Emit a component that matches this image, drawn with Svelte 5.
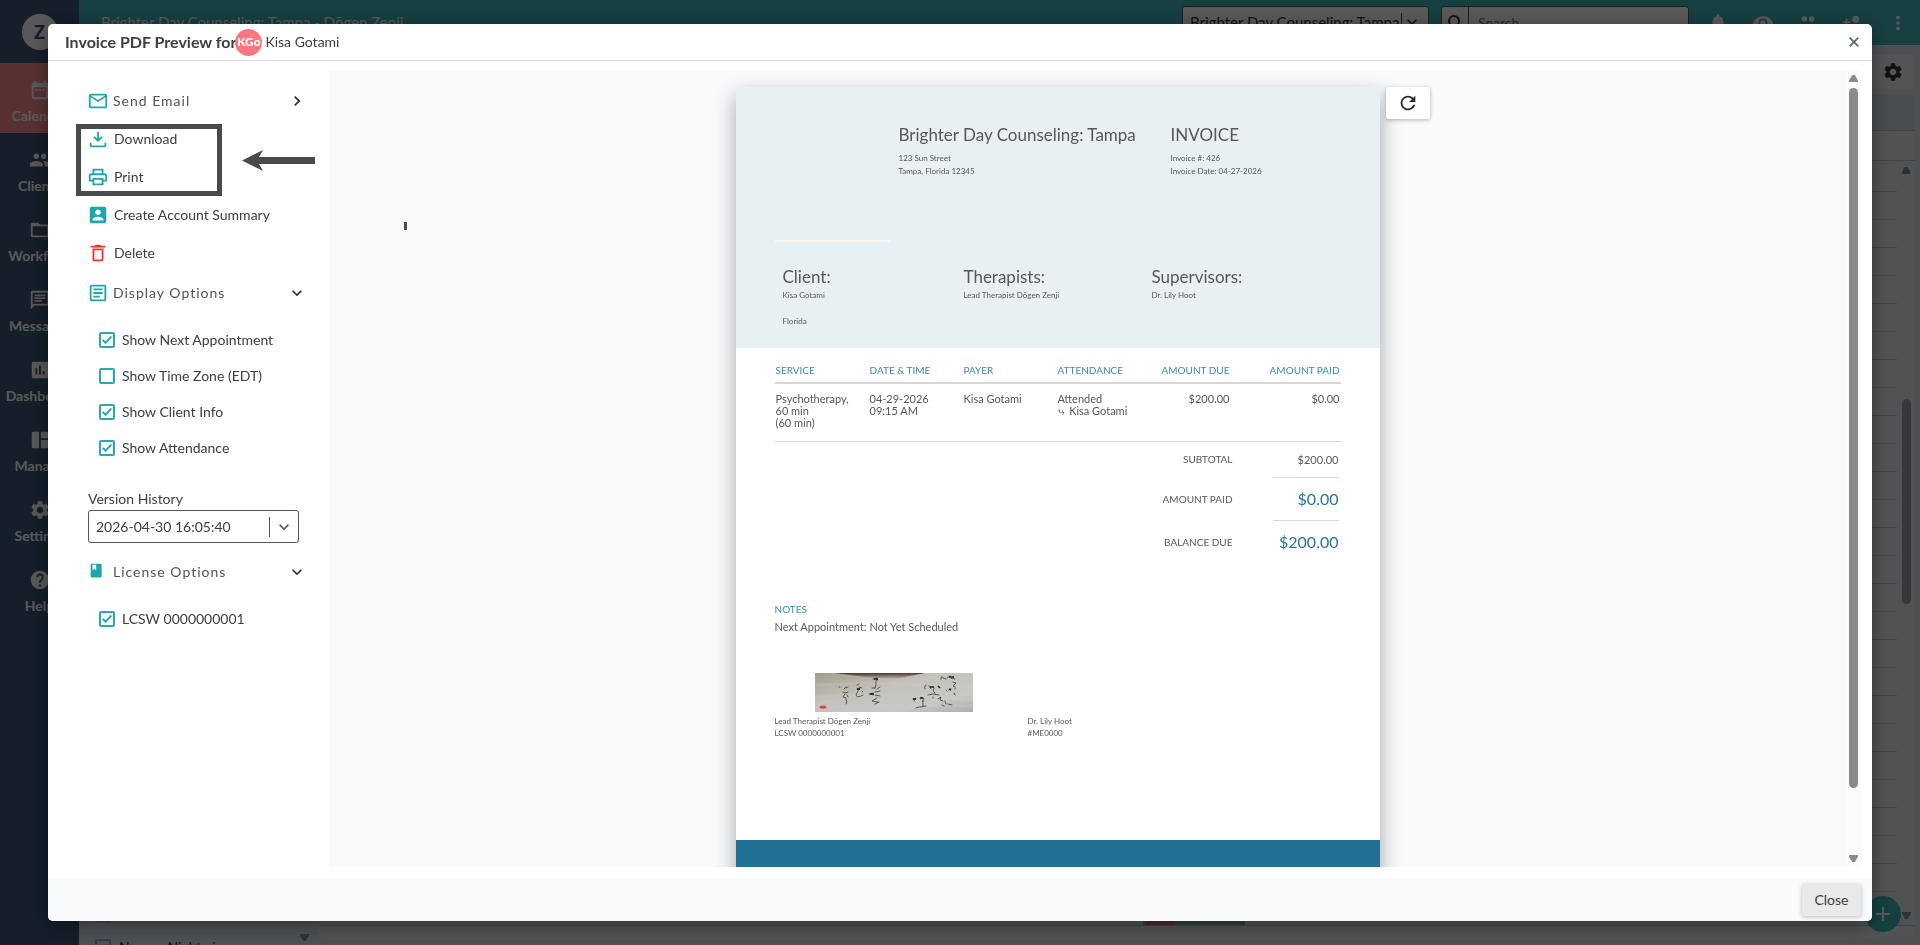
<script>
  const icons = {
    calendar: 'M19 4h-1V2h-2v2H8V2H6v2H5c-1.1 0-2 .9-2 2v14c0 1.1.9 2 2 2h14c1.1 0 2-.9 2-2V6c0-1.1-.9-2-2-2zm0 16H5V9h14v11zM7 11h2v2H7zm4 0h2v2h-2zm4 0h2v2h-2z',
    people: 'M16 11c1.66 0 2.99-1.34 2.99-3S17.66 5 16 5c-1.66 0-3 1.34-3 3s1.34 3 3 3zm-8 0c1.66 0 2.99-1.34 2.99-3S9.66 5 8 5C6.34 5 5 6.34 5 8s1.34 3 3 3zm0 2c-2.33 0-7 1.17-7 3.5V19h14v-2.5c0-2.33-4.67-3.5-7-3.5zm8 0c-.29 0-.62.02-.97.05 1.16.84 1.97 1.97 1.97 3.45V19h6v-2.5c0-2.33-4.67-3.5-7-3.5z',
    folder: 'M20 6h-8l-2-2H4c-1.1 0-2 .9-2 2v12c0 1.1.9 2 2 2h16c1.1 0 2-.9 2-2V8c0-1.1-.9-2-2-2zm0 12H4V8h16v10z',
    chat: 'M4 4h16v12H5.17L4 17.17V4m0-2c-1.1 0-2 .9-2 2v18l4-4h14c1.1 0 2-.9 2-2V4c0-1.1-.9-2-2-2H4zm2 10h8v2H6v-2zm0-3h12v2H6V9zm0-3h12v2H6V6z',
    chart: 'M19 3H5c-1.1 0-2 .9-2 2v14c0 1.1.9 2 2 2h14c1.1 0 2-.9 2-2V5c0-1.1-.9-2-2-2zM9 17H7v-7h2v7zm4 0h-2V7h2v10zm4 0h-2v-4h2v4z',
    grid: 'M11 21H5c-1.1 0-2-.9-2-2V5c0-1.1.9-2 2-2h6v18zm2 0h6c1.1 0 2-.9 2-2v-7h-8v9zm8-11V5c0-1.1-.9-2-2-2h-6v7h8z',
    settings: 'M19.14 12.94c.04-.3.06-.61.06-.94 0-.32-.02-.64-.07-.94l2.03-1.58c.18-.14.23-.41.12-.61l-1.92-3.32c-.12-.22-.37-.29-.59-.22l-2.39.96c-.5-.38-1.03-.7-1.62-.94l-.36-2.54c-.04-.24-.24-.41-.48-.41h-3.84c-.24 0-.43.17-.47.41l-.36 2.54c-.59.24-1.13.57-1.62.94l-2.39-.96c-.22-.08-.47 0-.59.22L2.74 8.87c-.12.21-.08.47.12.61l2.03 1.58c-.05.3-.09.63-.09.94s.02.64.07.94l-2.03 1.58c-.18.14-.23.41-.12.61l1.92 3.32c.12.22.37.29.59.22l2.39-.96c.5.38 1.03.7 1.62.94l.36 2.54c.05.24.24.41.48.41h3.84c.24 0 .44-.17.47-.41l.36-2.54c.59-.24 1.13-.56 1.62-.94l2.39.96c.22.08.47 0 .59-.22l1.92-3.32c.12-.22.07-.47-.12-.61l-2.01-1.58zM12 15.6c-1.98 0-3.6-1.62-3.6-3.6s1.62-3.6 3.6-3.6 3.6 1.62 3.6 3.6-1.62 3.6-3.6 3.6z',
    help: 'M12 2C6.48 2 2 6.48 2 12s4.48 10 10 10 10-4.48 10-10S17.52 2 12 2zm1 17h-2v-2h2v2zm2.07-7.75l-.9.92C13.45 12.9 13 13.5 13 15h-2v-.5c0-1.1.45-2.1 1.17-2.83l1.24-1.26c.37-.36.59-.86.59-1.41 0-1.1-.9-2-2-2s-2 .9-2 2H8c0-2.21 1.79-4 4-4s4 1.79 4 4c0 .88-.36 1.68-.93 2.25z',
    mail: 'M22 6c0-1.1-.9-2-2-2H4c-1.1 0-2 .9-2 2v12c0 1.1.9 2 2 2h16c1.1 0 2-.9 2-2V6zm-2 0l-8 5-8-5h16zm0 12H4V8l8 5 8-5v10z',
    download: 'M11 4h2v7.5l2.6-2.6L17 10.3l-5 5-5-5 1.4-1.4 2.6 2.6V4zM3 16h2v3h14v-3h2v3c0 1.1-.9 2-2 2H5c-1.1 0-2-.9-2-2v-3z',
    print: 'M19 8h-1V3H6v5H5c-1.66 0-3 1.34-3 3v6h4v4h12v-4h4v-6c0-1.66-1.34-3-3-3zM8 5h8v3H8V5zm8 12v2H8v-4h8v2zm2-2v-2H6v2H4v-4c0-.55.45-1 1-1h14c.55 0 1 .45 1 1v4h-2z',
    account: 'M3 5v14c0 1.1.89 2 2 2h14c1.1 0 2-.9 2-2V5c0-1.1-.9-2-2-2H5c-1.11 0-2 .9-2 2zm12 4c0 1.66-1.34 3-3 3s-3-1.34-3-3 1.34-3 3-3 3 1.34 3 3zm-9 8c0-2 4-3.1 6-3.1s6 1.1 6 3.1v1H6v-1z',
    trash: 'M6 19c0 1.1.9 2 2 2h8c1.1 0 2-.9 2-2V7H6v12zM8 9h8v10H8V9zm7.5-5l-1-1h-5l-1 1H4v2h16V4z',
    article: 'M19 5v14H5V5h14m0-2H5c-1.1 0-2 .9-2 2v14c0 1.1.9 2 2 2h14c1.1 0 2-.9 2-2V5c0-1.1-.9-2-2-2zM14 17H7v-2h7v2zm3-4H7v-2h10v2zm0-4H7V7h10v2z',
    book: 'M4 4.500C4 3.500 4.500 3 5.500 3h9c1 0 1.500.5 1.500 1.500v12c0 1-.5 1.500-1.500 1.500h-9c-1 0-1.500-.5-1.500-1.500v-12zM6 4v6l2-1.500 2 1.500V4z',
    refresh: 'M17.65 6.35C16.2 4.9 14.21 4 12 4c-4.42 0-7.99 3.58-7.99 8s3.57 8 7.99 8c3.73 0 6.84-2.55 7.73-6h-2.08c-.82 2.33-3.04 4-5.65 4-3.31 0-6-2.69-6-6s2.69-6 6-6c1.66 0 3.14.69 4.22 1.78L13 11h7V4l-2.35 2.35z',
    bell: 'M12 22c1.1 0 2-.9 2-2h-4c0 1.1.89 2 2 2zm6-6v-5c0-3.07-1.64-5.64-4.500-6.320V4c0-.83-.67-1.500-1.500-1.500s-1.500.67-1.500 1.500v.68C7.630 5.360 6 7.920 6 11v5l-2 2v1h16v-1l-2-2z',
    eye: 'M12 4.500C7 4.500 2.730 7.610 1 12c1.730 4.390 6 7.500 11 7.500s9.270-3.110 11-7.500c-1.730-4.390-6-7.500-11-7.500zM12 17c-2.760 0-5-2.240-5-5s2.240-5 5-5 5 2.240 5 5-2.240 5-5 5zm0-8c-1.660 0-3 1.340-3 3s1.340 3 3 3 3-1.340 3-3-1.340-3-3-3z',
    group: 'M8 4.500a3 3 0 1 0 0 6 3 3 0 0 0 0-6zm8 0a3 3 0 1 0 0 6 3 3 0 0 0 0-6zM8 13c-3 0-6 1-6 3v3h20v-3c0-2-3-3-6-3-1.500 0-3 .3-4 1-1-.7-2.500-1-4-1z',
    addPerson: 'M15 12c2.210 0 4-1.790 4-4s-1.790-4-4-4-4 1.790-4 4 1.790 4 4 4zm-9-2V7H4v3H1v2h3v3h2v-3h3v-2H6zm9 4c-2.670 0-8 1.340-8 4v2h16v-2c0-2.660-5.330-4-8-4z',
    dots: 'M12 8c1.1 0 2-.9 2-2s-.9-2-2-2-2 .9-2 2 .9 2 2 2zm0 2c-1.1 0-2 .9-2 2s.9 2 2 2 2-.9 2-2-.9-2-2-2zm0 6c-1.1 0-2 .9-2 2s.9 2 2 2 2-.9 2-2-.9-2-2-2z',
    close: 'M19 6.410L17.590 5 12 10.590 6.410 5 5 6.410 10.590 12 5 17.590 6.410 19 12 13.410 17.590 19 19 17.590 13.410 12z',
    right: 'M8.590 16.590L10 18l6-6-6-6-1.410 1.410L13.170 12z',
    down: 'M7.410 8.590L12 13.170l4.590-4.580L18 10l-6 6-6-6z',
    plus: 'M19 13h-6v6h-2v-6H5v-2h6V5h2v6h6v2z'
  }

  const nav = [
    { label: 'Calendar', icon: 'calendar', active: true },
    { label: 'Clients', icon: 'people' },
    { label: 'Workflow', icon: 'folder' },
    { label: 'Messages', icon: 'chat' },
    { label: 'Dashboard', icon: 'chart' },
    { label: 'Manage', icon: 'grid' },
    { label: 'Settings', icon: 'settings' },
    { label: 'Help', icon: 'help' }
  ]

  const tools = ['bell', 'eye', 'group', 'addPerson', 'dots']

  let options = $state([
    { label: 'Show Next Appointment', checked: true },
    { label: 'Show Time Zone (EDT)', checked: false },
    { label: 'Show Client Info', checked: true },
    { label: 'Show Attendance', checked: true }
  ])
  let license = $state(true)
</script>

{#snippet icon(name, size = 22)}
  <svg width={size} height={size} viewBox="0 0 24 24" fill="currentColor" fill-rule="evenodd" aria-hidden="true"><path d={icons[name]} /></svg>
{/snippet}

<div class="app">
  <nav class="nav">
    <div class="brand"><span class="brand-mark">Z</span></div>
    {#each nav as item}
      <a class="nav-item" class:active={item.active} href="#{item.label.toLowerCase()}">
        {@render icon(item.icon, 22)}
        <span>{item.label}</span>
      </a>
    {/each}
  </nav>

  <div class="page">
    <header class="topbar">
      <span class="practice">Brighter Day Counseling: Tampa - Dōgen Zenji</span>
      <div class="picker">
        <span>Brighter Day Counseling: Tampa</span>
        {@render icon('down', 20)}
      </div>
      <div class="search">
        <svg width="26" height="26" viewBox="0 0 26 26" fill="none" stroke="currentColor" stroke-width="2" aria-hidden="true"><circle cx="12" cy="12" r="5" /><path d="M16 16l5 5" /></svg>
        <input type="search" placeholder="Search" aria-label="Search" />
      </div>
      <div class="tools">
        {#each tools as name}
          <button aria-label={name}>{@render icon(name, 22)}</button>
        {/each}
      </div>
    </header>

    <div class="workspace">
      <div class="people">
        <input type="checkbox" aria-label="Select calendar" />
        <label><input type="checkbox" /> Naomo Nightwing</label>
        <span class="arrow-down"></span>
      </div>
      <div class="schedule">
        <div class="schedule-tools"><button aria-label="Calendar settings">{@render icon('settings', 22)}</button></div>
        <div class="sheet">
          <div class="sheet-head"></div>
          <div class="sheet-allday"></div>
          <div class="sheet-body">
            <div class="slots"></div>
            <div class="sheet-bar">
              <span class="arrow-up"></span>
              <span class="sheet-thumb"></span>
              <span class="arrow-down"></span>
            </div>
            <div class="booking"></div>
          </div>
        </div>
      </div>
    </div>
    <button class="fab" aria-label="Add">{@render icon('plus', 24)}</button>
  </div>
</div>

<div class="backdrop">
  <div class="modal" role="dialog" aria-labelledby="modal-title">
    <header class="modal-head">
      <h1 id="modal-title">Invoice PDF Preview for</h1>
      <span class="avatar">KGo</span>
      <span class="client-name">Kisa Gotami</span>
      <button class="close-x" aria-label="Close preview">{@render icon('close', 16)}</button>
    </header>

    <div class="modal-body">
      <aside class="side">
        <button class="heading first">{@render icon('mail')}<span>Send Email</span>{@render icon('right', 20)}</button>
        <button class="action">{@render icon('download')}Download</button>
        <button class="action">{@render icon('print')}Print</button>
        <button class="action">{@render icon('account')}Create Account Summary</button>
        <button class="action danger">{@render icon('trash')}Delete</button>

        <button class="heading">{@render icon('article')}<span>Display Options</span>{@render icon('down', 20)}</button>
        <div class="checks">
          {#each options as option}
            <label><input type="checkbox" bind:checked={option.checked} />{option.label}</label>
          {/each}
        </div>

        <div class="version">
          <label for="version">Version History</label>
          <div class="select">
            <select id="version"><option>2026-04-30 16:05:40</option></select>
            <span class="select-arrow">{@render icon('down', 20)}</span>
          </div>
        </div>

        <button class="heading">{@render icon('book')}<span>License Options</span>{@render icon('down', 20)}</button>
        <div class="checks">
          <label><input type="checkbox" bind:checked={license} />LCSW 0000000001</label>
        </div>

        <div class="callout"></div>
        <svg class="callout-arrow" width="73" height="21" viewBox="0 0 73 21" fill="#4a4a4a" aria-hidden="true"><path d="M0 10.500L21 0l-4 7h56v7H17l4 7z" /></svg>
      </aside>

      <main class="preview">
        <div class="scroller">
          <article class="paper">
            <section class="paper-top">
              <div class="masthead">
                <div class="logo-space"></div>
                <div class="from">
                  <h2>Brighter Day Counseling: Tampa</h2>
                  <p>123 Sun Street</p>
                  <p>Tampa, Florida 12345</p>
                </div>
                <div>
                  <h2>INVOICE</h2>
                  <p>Invoice #: 426</p>
                  <p>Invoice Date: 04-27-2026</p>
                </div>
              </div>
              <div class="parties">
                <div>
                  <h2>Client:</h2>
                  <p>Kisa Gotami</p>
                  <p class="state">Florida</p>
                </div>
                <div>
                  <h2>Therapists:</h2>
                  <p>Lead Therapist Dōgen Zenji</p>
                </div>
                <div>
                  <h2>Supervisors:</h2>
                  <p>Dr. Lily Hoot</p>
                </div>
              </div>
            </section>

            <section class="paper-main">
              <table class="lines">
                <thead>
                  <tr>
                    <th>SERVICE</th>
                    <th>DATE &amp; TIME</th>
                    <th>PAYER</th>
                    <th>ATTENDANCE</th>
                    <th class="due">AMOUNT DUE</th>
                    <th class="paid">AMOUNT PAID</th>
                  </tr>
                </thead>
                <tbody>
                  <tr>
                    <td>Psychotherapy,<br />60 min<br />(60 min)</td>
                    <td>04-29-2026<br />09:15 AM</td>
                    <td>Kisa Gotami</td>
                    <td>Attended<br />⤷&nbsp; Kisa Gotami</td>
                    <td class="due">$200.00</td>
                    <td class="paid">$0.00</td>
                  </tr>
                </tbody>
              </table>

              <dl class="totals">
                <dt>SUBTOTAL</dt>
                <dd>$200.00</dd>
                <dt>AMOUNT PAID</dt>
                <dd class="big">$0.00</dd>
                <dt>BALANCE DUE</dt>
                <dd class="big">$200.00</dd>
              </dl>

              <div class="notes">
                <h3>NOTES</h3>
                <p>Next Appointment: Not Yet Scheduled</p>
              </div>

              <div class="signatures">
                <div>
                  <svg class="signature" width="158" height="39" viewBox="0 0 158 39" role="img" aria-label="Signature">
                    <defs>
                      <linearGradient id="sheet" x1="0" x2="1" y1="0" y2="1">
                        <stop offset="0" stop-color="#a19d8c" />
                        <stop offset=".4" stop-color="#c4c2ba" />
                        <stop offset=".75" stop-color="#c8c8c4" />
                        <stop offset="1" stop-color="#a9adb0" />
                      </linearGradient>
                      <linearGradient id="fold" x1="0" x2="0" y1="0" y2="1">
                        <stop offset="0" stop-color="#4b3826" />
                        <stop offset="1" stop-color="#4b3826" stop-opacity="0" />
                      </linearGradient>
                    </defs>
                    <rect width="158" height="39" fill="url(#sheet)" />
                    <path d="M20 0h90L80 6 50 4z" fill="url(#fold)" />
                    <path d="M0 12q50-4 158 2M0 24q70-5 158 3M0 34q60-3 158-1" stroke="#d6d4ce" stroke-width="3" opacity=".2" fill="none" />
                    <g fill="none" stroke="#3a3a3a" stroke-width=".8" stroke-linecap="round">
                      <path d="M24 14l1 0M29 16l2-2M31 15l2-1M28 19l2 1 3-1M30 21l-2 3 3 1M32 22l1 2M31 26q2 3 0 5" />
                      <path d="M42 12l2-1M44 14l3 1M42 16l3-1-2 3-2 4q1 3 5 1l2-1M47 18l1 1" />
                      <path d="M58 6l4-1q2 2-1 3M61 9v3l-1 3M57 15l3 0M62 16l3-2M54 21l4-1M60 19l5-1M55 21l3 1M60 22l5 1M62 25l-5 3 6 1M60 31l4-2" />
                      <path d="M98 26l3-1-2 3M105 25l4 0-2 4 2-1M101 35l3-1M105 34l6-1M108 30v3" />
                      <path d="M110 16q-1-4 1-4M114 13l2 3M119 15q-2 4 1 5M113 22l5-1 6 1M118 24v1" />
                      <path d="M126 6q0-4 2-1l3 1M132 5l3-2M136 5l4 1M138 9l3 1-3 3 2 1M131 17l1 1M134 17l2-1M140 15v1M139 20l1 2" />
                      <path d="M123 26l3-2-1 3 3 1M130 28l1 3M127 32l2 1M133 31l4 1" />
                    </g>
                    <path d="M98 26l3 0M105 25l3 0M123 13l2 2M115 14l4 0M59 6l4 0M134 4l5 0M55 21l4 0M134 16l2 1M42 16l3 0" stroke="#1c1c1c" stroke-width="1.500" />
                    <ellipse cx="8" cy="34" rx="3.500" ry="1.600" fill="#d8453c" />
                  </svg>
                  <p>Lead Therapist Dōgen Zenji</p>
                  <p>LCSW 0000000001</p>
                </div>
                <div>
                  <p>Dr. Lily Hoot</p>
                  <p>#ME0000</p>
                </div>
              </div>
            </section>
            <footer class="paper-foot"></footer>
          </article>
          <button class="refresh" aria-label="Refresh preview">{@render icon('refresh', 22)}</button>
          <span class="caret"></span>
        </div>
        <div class="scrollbar">
          <span class="arrow-up"></span>
          <div class="track"><span class="thumb"></span></div>
          <span class="arrow-down"></span>
        </div>
      </main>
    </div>

    <footer class="modal-foot"><button>Close</button></footer>
  </div>
</div>

<style>
  :global(body) {
    overflow: hidden;
  }

  * {
    box-sizing: border-box;
  }

  h1, h2, h3, p, dl, dd {
    margin: 0;
  }

  button {
    border: 0;
    padding: 0;
    background: none;
    color: inherit;
    font: inherit;
    cursor: pointer;
  }

  svg {
    display: block;
    flex: none;
  }

  .app, .backdrop {
    font-family: Lato, 'Open Sans', sans-serif;
    font-size: 14px;
    line-height: 18px;
  }

  /* application behind the dialog */
  .app {
    display: flex;
    height: 100vh;
    background: #dde7ee;
    overflow: hidden;
  }

  .nav {
    display: flex;
    flex-direction: column;
    flex: none;
    width: 79px;
    background: #3d5875;
    color: #fff;
  }

  .brand {
    display: flex;
    align-items: center;
    justify-content: center;
    height: 63px;
  }

  .brand-mark {
    display: flex;
    align-items: center;
    justify-content: center;
    width: 36px;
    height: 36px;
    border-radius: 50%;
    background: #fff;
    color: #3d5875;
    font-size: 18px;
    font-weight: 900;
  }

  .nav-item {
    display: flex;
    flex-direction: column;
    align-items: center;
    gap: 6px;
    height: 70px;
    padding-top: 16px;
    color: inherit;
    font-weight: bold;
    text-decoration: none;
  }

  .nav-item.active {
    background: #ff8a90;
  }

  .page {
    position: relative;
    display: flex;
    flex-direction: column;
    flex: 1;
    min-width: 0;
  }

  .topbar {
    display: flex;
    align-items: flex-start;
    height: 45px;
    padding: 6px 11px 0 22px;
    background: #3fb4ba;
    color: #fff;
  }

  .practice {
    margin-right: auto;
    padding-top: 7px;
    font-size: 15px;
  }

  .picker {
    display: flex;
    align-items: center;
    justify-content: space-between;
    width: 247px;
    height: 32px;
    margin-right: 12px;
    padding: 0 6px 0 7px;
    border: 1px solid #555;
    border-radius: 3px;
    background: #fff;
    color: #333;
    font-size: 15px;
  }

  .picker span {
    flex: 1;
    border-right: 1px solid #555;
  }

  .search {
    display: flex;
    align-items: center;
    width: 248px;
    height: 32px;
    margin-right: 18px;
    border: 1px solid #555;
    border-radius: 3px;
    background: #fff;
    color: #333;
  }

  .search input {
    flex: 1;
    min-width: 0;
    height: 100%;
    padding: 0 9px;
    border: 0;
    border-left: 1px solid #555;
    background: none;
    font: inherit;
  }

  .tools {
    display: flex;
    gap: 23px;
    padding-top: 6px;
  }

  .workspace {
    display: flex;
    flex: 1;
    min-height: 0;
  }

  .people {
    display: flex;
    flex-direction: column;
    justify-content: flex-end;
    gap: 16px;
    position: relative;
    width: 240px;
    margin-bottom: -11px;
    padding-left: 16px;
    color: #333;
  }

  .people label {
    display: flex;
    align-items: center;
    gap: 8px;
    height: 18px;
  }

  .people input {
    width: 16px;
    height: 16px;
    margin: 0;
    border: 2px solid #8fa5e8;
    border-radius: 2px;
    appearance: none;
  }

  .people .arrow-down {
    position: absolute;
    right: 10px;
    bottom: 15px;
  }

  .schedule {
    display: flex;
    flex-direction: column;
    flex: 1;
    margin-right: 5px;
    padding: 10px 0 6px;
  }

  .schedule-tools {
    display: flex;
    justify-content: flex-end;
    height: 33px;
    padding-right: 11px;
    border-radius: 4px;
    background: #eef1f4;
    color: #333;
  }

  .sheet {
    display: flex;
    flex-direction: column;
    flex: 1;
    margin-top: 7px;
    padding-bottom: 13px;
    border-radius: 4px;
    background: #e6ecf1;
  }

  .sheet-head {
    height: 36px;
    border-bottom: 1px solid #b9c2c9;
    background: #d3dce3;
  }

  .sheet-allday {
    height: 30px;
    border-bottom: 1px solid #b9c2c9;
  }

  .sheet-body {
    position: relative;
    display: flex;
    flex: 1;
    border-bottom: 1px solid #b9c2c9;
  }

  .slots {
    flex: 1;
    background-image: linear-gradient(#b9c2c9 1px, transparent 1px), linear-gradient(#cdd5db 1px, transparent 1px);
    background-position: 0 30px, 0 2px;
    background-size: 100% 56px;
  }

  .sheet-bar {
    display: flex;
    flex-direction: column;
    align-items: center;
    justify-content: space-between;
    width: 18px;
    padding: 6px 0;
  }

  .sheet-thumb {
    width: 9px;
    height: 205px;
    margin-bottom: 84px;
    border-radius: 5px;
    background: #989fa5;
  }

  .booking {
    position: absolute;
    bottom: 0;
    left: 824px;
    width: 102px;
    height: 8px;
    border-left: 3px solid #8fc4c9;
    background: linear-gradient(90deg, #e8717a 29px, #8fb4ba 29px);
  }

  .fab {
    position: absolute;
    right: 19px;
    bottom: 13px;
    display: flex;
    align-items: center;
    justify-content: center;
    width: 36px;
    height: 36px;
    border-radius: 50%;
    background: #3fb4ba;
    color: #fff;
  }

  .arrow-up, .arrow-down {
    width: 9px;
    height: 7px;
    background: #8b8b8b;
    clip-path: polygon(35% 0, 65% 0, 100% 80%, 100% 100%, 0 100%, 0 80%);
  }

  .arrow-down {
    transform: rotate(180deg);
  }

  /* dialog */
  .backdrop {
    position: fixed;
    inset: 0;
    display: flex;
    padding: 24px 48px;
    background: rgba(0, 0, 0, .65);
    color: #3b4045;
  }

  .modal {
    display: flex;
    flex-direction: column;
    flex: 1;
    min-width: 0;
    border-radius: 5px;
    background: #fff;
    box-shadow: 0 4px 20px rgba(0, 0, 0, .4);
    overflow: hidden;
  }

  .modal-head {
    display: flex;
    align-items: center;
    flex: none;
    height: 37px;
    padding: 0 10px 0 17px;
    border-bottom: 1px solid #dcdee0;
  }

  h1 {
    font-size: 16px;
    font-weight: bold;
    line-height: 20px;
  }

  .avatar {
    display: flex;
    align-items: center;
    justify-content: center;
    width: 27px;
    height: 27px;
    margin-left: -1px;
    border-radius: 50%;
    background: #ff777e;
    color: #fff;
    font-size: 12px;
    font-weight: 900;
  }

  .client-name {
    margin-left: 3px;
  }

  .close-x {
    margin-left: auto;
    color: #5a7085;
  }

  .close-x svg {
    stroke: currentColor;
    stroke-width: 1px;
  }

  .modal-body {
    display: flex;
    flex: 1;
    min-height: 0;
    padding: 9px 11px 11px 0;
  }

  .side {
    position: relative;
    flex: none;
    width: 281px;
    padding: 12px 22px 0 39px;
  }

  .heading {
    display: flex;
    align-items: center;
    gap: 4px;
    width: 100%;
    height: 42px;
    color: #1fa6ad;
    letter-spacing: 1px;
    text-align: left;
  }

  .heading.first {
    height: 38px;
  }

  .heading span {
    flex: 1;
    color: #505458;
  }

  .heading span + :global(svg) {
    color: #2a2d30;
  }

  .action {
    display: flex;
    align-items: center;
    gap: 5px;
    width: 100%;
    height: 38px;
    text-align: left;
  }

  .action :global(svg) {
    color: #1fa6ad;
  }

  .action.danger :global(svg) {
    color: #f0352b;
  }

  .checks {
    padding: 8px 0 0 12px;
  }

  .checks label {
    display: flex;
    align-items: center;
    gap: 7px;
    height: 36px;
  }

  .checks input {
    position: relative;
    width: 16px;
    height: 16px;
    margin: 0;
    border: 2px solid #2aa9b0;
    border-radius: 2px;
    appearance: none;
  }

  .checks input:checked::after {
    content: '';
    position: absolute;
    inset: 1px;
    background: #2aa9b0;
    clip-path: polygon(0 55%, 14% 42%, 36% 63%, 88% 8%, 100% 22%, 36% 92%);
  }

  .version {
    padding: 24px 8px 8px 1px;
  }

  .version label {
    display: block;
    margin-bottom: 2px;
  }

  .select {
    position: relative;
  }

  select {
    width: 100%;
    height: 33px;
    padding: 0 7px;
    border: 1px solid #50555e;
    border-radius: 3px;
    background: #fff;
    color: inherit;
    font: inherit;
    appearance: none;
  }

  .select-arrow {
    position: absolute;
    top: 7px;
    right: 1px;
    padding: 0 4px;
    border-left: 1px solid #50555e;
    color: #50555e;
    pointer-events: none;
  }

  .callout {
    position: absolute;
    top: 54px;
    left: 28px;
    width: 146px;
    height: 72px;
    border: 5px solid #4a4a4a;
    pointer-events: none;
  }

  .callout-arrow {
    position: absolute;
    top: 80px;
    left: 194px;
  }

  .preview {
    display: flex;
    flex: 1;
    min-width: 0;
    background: #f9fafc;
    overflow: hidden;
  }

  .scroller {
    position: relative;
    display: flex;
    align-items: flex-start;
    justify-content: center;
    gap: 6px;
    flex: 1;
    padding: 17px 10px 0 0;
    overflow: hidden;
  }

  .caret {
    position: absolute;
    top: 152px;
    left: 75px;
    width: 3px;
    height: 8px;
    background: #4a4a4a;
  }

  .refresh {
    display: flex;
    align-items: center;
    justify-content: center;
    width: 44px;
    height: 32px;
    border-radius: 3px;
    background: #fff;
    box-shadow: 0 1px 4px rgba(0, 0, 0, .3);
    color: #2a2d30;
  }

  .scrollbar {
    display: flex;
    flex-direction: column;
    align-items: center;
    width: 15px;
    padding: 5px 0;
    background: #fcfcfc;
  }

  .track {
    flex: 1;
    margin: 6px 0;
  }

  .thumb {
    display: block;
    width: 9px;
    height: 92%;
    border-radius: 5px;
    background: #8b8b8b;
  }

  /* invoice */
  .paper {
    width: 644px;
    background: #fff;
    box-shadow: 0 8px 20px rgba(0, 0, 0, .35);
    font-size: 11px;
    line-height: 12px;
    color: #55585b;
  }

  .paper h2 {
    font-size: 17px;
    font-weight: normal;
    line-height: 22px;
  }

  .paper-top {
    height: 261px;
    padding: 37px 39px 0;
    background: #e8f0f3;
    font-size: 8px;
    line-height: 13px;
  }

  .masthead {
    display: flex;
    height: 142px;
  }

  .masthead h2 {
    margin-bottom: 6px;
  }

  .logo-space {
    width: 115px;
    height: 118px;
    margin-right: 9px;
    border-bottom: 2px solid #fbf6ee;
  }

  .from {
    width: 272px;
  }

  .parties {
    display: grid;
    grid-template-columns: 181px 188px 1fr;
    padding-left: 8px;
  }

  .parties p {
    padding-top: 1px;
  }

  .parties .state {
    padding-top: 13px;
  }

  .paper-main {
    height: 492px;
    padding: 16px 39px 0;
  }

  .lines {
    width: 100%;
    border-collapse: collapse;
    table-layout: fixed;
  }

  .lines th, .lines td {
    width: 94px;
    padding: 0 1px;
    text-align: left;
    vertical-align: top;
    white-space: nowrap;
  }

  .lines th {
    height: 19px;
    border-bottom: 2px solid #d5d7d9;
    color: #4189ab;
    font-size: 10px;
    font-weight: normal;
  }

  .lines td {
    height: 58px;
    padding-top: 9px;
    border-bottom: 1px solid #d5d7d9;
  }

  .lines .due {
    width: 80px;
    text-align: right;
  }

  .lines .paid {
    width: 110px;
    text-align: right;
  }

  .totals {
    display: grid;
    grid-template-columns: 1fr 66px;
    column-gap: 40px;
    padding: 0 2px 0 0;
    line-height: 35px;
  }

  .totals dt {
    font-size: 10px;
    text-align: right;
  }

  .totals dd {
    border-bottom: 1px solid #d5d7d9;
    text-align: right;
  }

  .totals .big {
    color: #2a7799;
    font-size: 16px;
    line-height: 42px;
  }

  .totals .big:last-child {
    border-bottom: 0;
  }

  .totals dt:nth-of-type(n + 2) {
    line-height: 42px;
  }

  .notes {
    padding-top: 38px;
    line-height: 17px;
  }

  .notes h3 {
    color: #4189ab;
    font-size: 10px;
    font-weight: normal;
  }

  .signatures {
    display: grid;
    grid-template-columns: 253px 1fr;
    align-items: end;
    padding-top: 38px;
    font-size: 8px;
  }

  .signature {
    margin: 0 0 3px 40px;
  }

  .paper-foot {
    height: 60px;
    background: #217196;
  }

  .modal-foot {
    display: flex;
    align-items: center;
    justify-content: flex-end;
    flex: none;
    height: 43px;
    padding: 0 11px;
    background: #f9fafc;
  }

  .modal-foot button {
    width: 59px;
    height: 32px;
    border-radius: 3px;
    background: #e9e9e9;
    box-shadow: 0 1px 4px rgba(0, 0, 0, .25);
  }
</style>
